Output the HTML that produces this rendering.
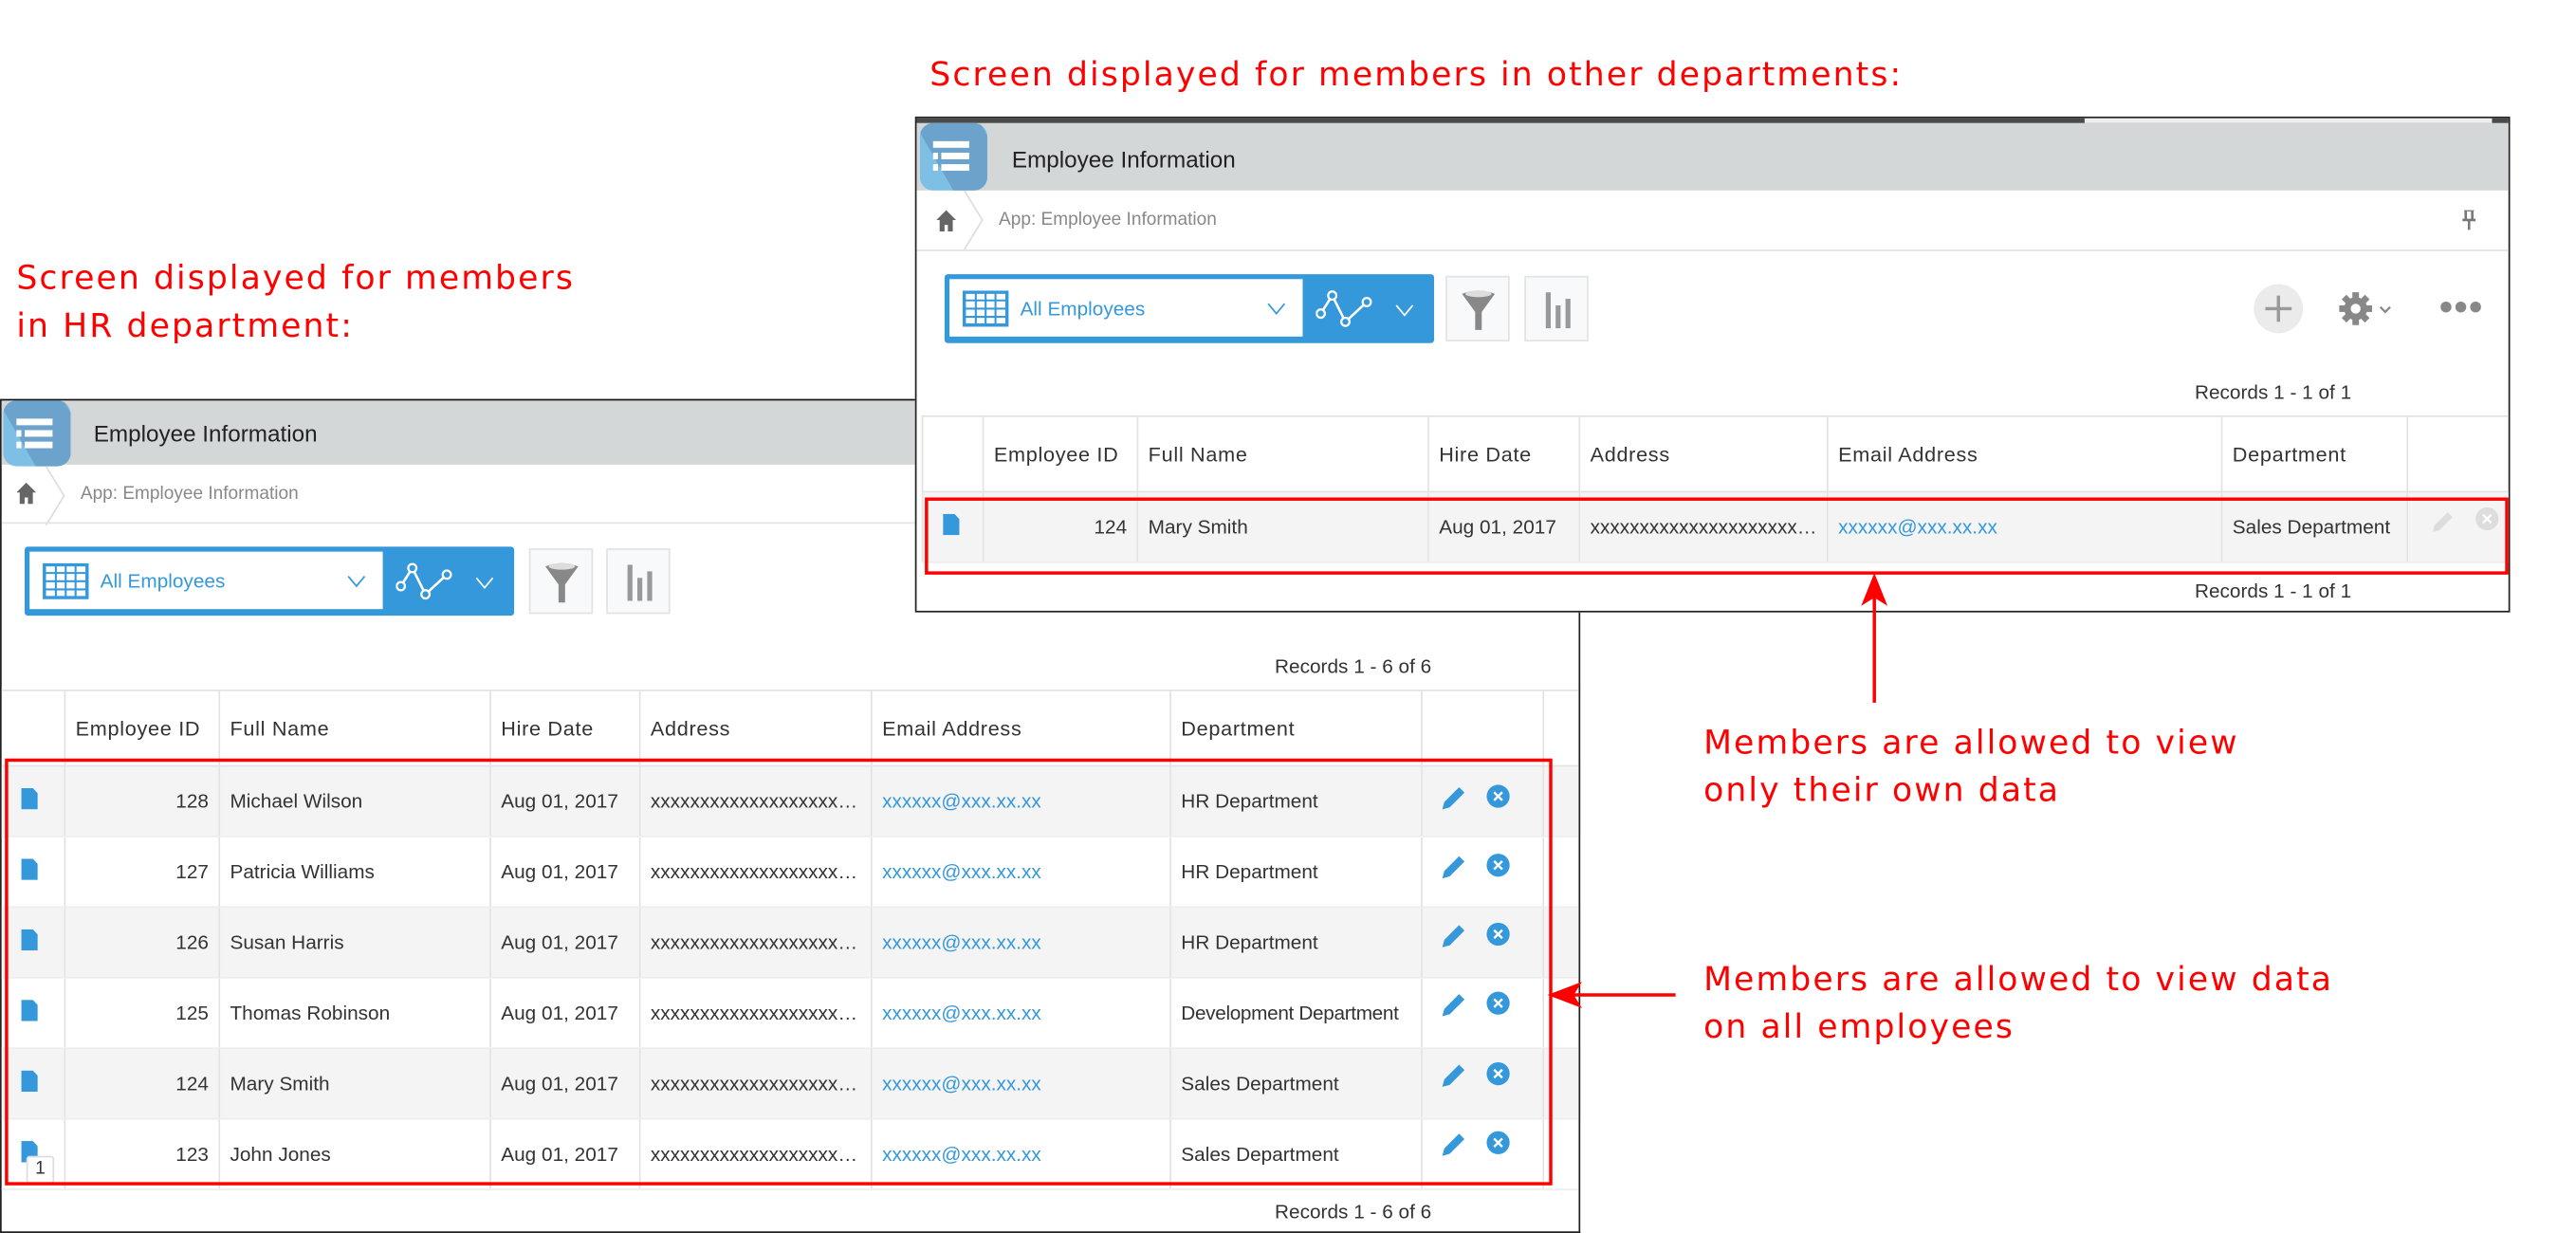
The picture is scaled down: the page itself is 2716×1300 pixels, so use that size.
<!DOCTYPE html>
<html><head><meta charset="utf-8">
<style>
html,body{margin:0;padding:0;background:#fff;overflow:hidden;width:2716px;height:1300px}
#s{position:absolute;left:0;top:0;width:1568px;height:751px;transform:scale(1.732,1.731);transform-origin:0 0;font-family:"Liberation Sans",sans-serif;color:#333}
.a{position:absolute}
.ann{position:absolute;color:#f00;font-family:"DejaVu Sans",sans-serif;font-size:20px;letter-spacing:1.2px;line-height:29px;white-space:nowrap}
.panel{position:absolute;background:#fff;border:1px solid #222;overflow:hidden}
.hdr{position:absolute;left:0;right:0;background:#d4d7d7}
.ico{position:absolute;width:40px;height:40px;border-radius:8px;background:#7ebfe6;overflow:hidden}
.ico i{position:absolute;background:#fff;height:4px}
.ttl{position:absolute;font-size:14px;color:#222}
.bc{position:absolute;font-size:11px;color:#888}
.line{position:absolute;left:0;right:0;height:1px;background:#e3e3e3}
.blue{position:absolute;background:#3498db;border-radius:2px}
.sel{position:absolute;background:#fff;left:3px;top:3px;width:214px;height:35px}
.btn{position:absolute;width:39px;height:40px;background:#f7f9fa;border:1px solid #e3e3e3;box-sizing:border-box}
table{position:absolute;border-collapse:collapse;table-layout:fixed;font-size:12px}
td,th{border-left:1px solid #e3e3e3;padding:0 6px;white-space:nowrap;overflow:hidden;text-overflow:ellipsis;font-weight:normal;text-align:left}
th{height:45px;color:#333;letter-spacing:0.4px;border-top:1px solid #e3e3e3;border-bottom:1px solid #e3e3e3;font-size:12.5px}
td{height:42px;color:#333;border-bottom:1px solid #eee}
tr.g td{background:#f4f4f4}
td.n{text-align:right}
td.e{color:#3498db}
.doc{display:inline-block;width:10px;height:13px;background:#3498db;clip-path:polygon(0 0,70% 0,100% 25%,100% 100%,0 100%)}
.rec{position:absolute;font-size:12px;color:#333}
.red{position:absolute;border:2px solid #f00}
</style></head><body><div id="s">

<div class="ann" style="left:566px;top:31px">Screen displayed for members in other departments:</div>
<div class="ann" style="left:10px;top:155px">Screen displayed for members<br>in HR department:</div>
<div class="ann" style="left:1037px;top:438px">Members are allowed to view<br>only their own data</div>
<div class="ann" style="left:1037px;top:582px">Members are allowed to view data<br>on all employees</div>

<!-- LEFT PANEL -->
<div class="panel" style="left:0;top:243px;width:960px;height:506px;border-top-color:#111">
 <div class="hdr" style="top:0;height:39px"></div>
 <div class="ico" style="left:1px;top:0px;height:40px;width:41px;background:#7ebfe6"><div class="a" style="left:14px;top:0;width:40px;height:60px;background:#6ba3cc;transform:skewX(30deg)"></div><i style="left:8px;top:11px;width:22px"></i><i style="left:8px;top:18px;width:3px"></i><i style="left:13px;top:18px;width:17px"></i><i style="left:8px;top:25px;width:3px"></i><i style="left:13px;top:25px;width:17px"></i></div>
 <div class="ttl" style="left:56px;top:12px">Employee Information</div>
 <svg class="a" style="left:9px;top:50px" width="12" height="13" viewBox="0 0 12 13"><path d="M6 0L0 6h2v7h3V9h2v4h3V6h2z" fill="#666"/></svg>
 <svg class="a" style="left:26px;top:40px" width="14" height="36"><path d="M1 0L12 18L1 36" stroke="#ddd" fill="none"/></svg>
 <div class="bc" style="left:48px;top:51px">App: Employee Information</div>
 <div class="line" style="top:74px"></div>
 <div class="blue" style="left:14px;top:89px;width:298px;height:42px">
  <div class="sel" style="width:215px">
   <svg class="a" style="left:8px;top:7px" width="28" height="22"><rect x="1" y="1" width="26" height="20" fill="#fff" stroke="#3498db" stroke-width="2"/><path d="M1 6h26M1 11h26M1 16h26M8 1v20M14 1v20M20 1v20" stroke="#3498db" stroke-width="1.2"/></svg>
   <div class="a" style="left:43px;top:11px;font-size:12px;color:#3498db">All Employees</div>
   <svg class="a" style="left:193px;top:14px" width="12" height="8"><path d="M1 1l5 6 5-6" stroke="#3498db" fill="none"/></svg>
  </div>
  <svg class="a" style="left:226px;top:8px" width="36" height="26"><path d="M3 16L10 5L18 21L31 9" stroke="#fff" stroke-width="1.5" fill="none"/><circle cx="3" cy="16" r="2.5" fill="#3498db" stroke="#fff" stroke-width="1.3"/><circle cx="10" cy="5" r="2.5" fill="#3498db" stroke="#fff" stroke-width="1.3"/><circle cx="18" cy="21" r="2.5" fill="#3498db" stroke="#fff" stroke-width="1.3"/><circle cx="31" cy="9" r="2.5" fill="#3498db" stroke="#fff" stroke-width="1.3"/></svg>
  <svg class="a" style="left:274px;top:18px" width="12" height="8"><path d="M1 1l5 6 5-6" stroke="#fff" fill="none"/></svg>
 </div>
 <div class="btn" style="left:321px;top:90px"><svg class="a" style="left:8px;top:7px" width="22" height="26"><path d="M1 3Q11 -1 21 3L13 14V25H9V14Z" fill="#888"/><ellipse cx="11" cy="3" rx="8" ry="2" fill="#ddd"/></svg></div>
 <div class="btn" style="left:368px;top:90px"><svg class="a" style="left:11px;top:9px" width="18" height="22"><rect x="1" y="0" width="3" height="22" fill="#999"/><rect x="7" y="8" width="3" height="14" fill="#999"/><rect x="13" y="4" width="3" height="18" fill="#999"/></svg></div>
 <div class="rec" style="left:775px;top:155px">Records 1 - 6 of 6</div>
 <table style="left:-1px;top:176px;width:962px">
  <colgroup><col style="width:39px"><col style="width:94px"><col style="width:165px"><col style="width:91px"><col style="width:141px"><col style="width:182px"><col style="width:153px"><col style="width:74px"><col style="width:23px"></colgroup>
  <tr><th></th><th>Employee ID</th><th>Full Name</th><th>Hire Date</th><th>Address</th><th>Email Address</th><th>Department</th><th></th><th></th></tr>
  <tr class="g"><td><span class="doc" style="margin-left:6px"></span></td><td class="n">128</td><td>Michael Wilson</td><td>Aug 01, 2017</td><td>xxxxxxxxxxxxxxxxxxxxxxx</td><td class="e">xxxxxx@xxx.xx.xx</td><td>HR Department</td><td></td><td></td></tr>
  <tr><td><span class="doc" style="margin-left:6px"></span></td><td class="n">127</td><td>Patricia Williams</td><td>Aug 01, 2017</td><td>xxxxxxxxxxxxxxxxxxxxxxx</td><td class="e">xxxxxx@xxx.xx.xx</td><td>HR Department</td><td></td><td></td></tr>
  <tr class="g"><td><span class="doc" style="margin-left:6px"></span></td><td class="n">126</td><td>Susan Harris</td><td>Aug 01, 2017</td><td>xxxxxxxxxxxxxxxxxxxxxxx</td><td class="e">xxxxxx@xxx.xx.xx</td><td>HR Department</td><td></td><td></td></tr>
  <tr><td><span class="doc" style="margin-left:6px"></span></td><td class="n">125</td><td>Thomas Robinson</td><td>Aug 01, 2017</td><td>xxxxxxxxxxxxxxxxxxxxxxx</td><td class="e">xxxxxx@xxx.xx.xx</td><td style="letter-spacing:-0.2px">Development Department</td><td></td><td></td></tr>
  <tr class="g"><td><span class="doc" style="margin-left:6px"></span></td><td class="n">124</td><td>Mary Smith</td><td>Aug 01, 2017</td><td>xxxxxxxxxxxxxxxxxxxxxxx</td><td class="e">xxxxxx@xxx.xx.xx</td><td>Sales Department</td><td></td><td></td></tr>
  <tr><td style="position:relative"><span class="doc" style="margin-left:6px"></span><span style="position:absolute;left:15px;top:22px;width:15px;height:15px;background:#fff;border:1px solid #ddd;border-radius:2px;font-size:11px;text-align:center;line-height:15px">1</span></td><td class="n">123</td><td>John Jones</td><td>Aug 01, 2017</td><td>xxxxxxxxxxxxxxxxxxxxxxx</td><td class="e">xxxxxx@xxx.xx.xx</td><td>Sales Department</td><td></td><td></td></tr>
 </table>
 <div class="rec" style="left:775px;top:487px">Records 1 - 6 of 6</div>
</div>
<div class="red" style="left:3px;top:462px;width:938px;height:256px"></div>

<!-- RIGHT PANEL -->
<div class="panel" style="left:557px;top:71px;width:969px;height:300px">
 <div class="a" style="left:0;top:0;width:970px;height:3px;background:#4a4a4a"></div>
 <div class="a" style="left:711px;top:0;width:248px;height:3px;background:#eee"></div>
 <div class="hdr" style="top:3px;height:41px"></div>
 <div class="ico" style="left:2px;top:3px;height:41px;width:41px"><div class="a" style="left:14px;top:0;width:40px;height:60px;background:#6ba3cc;transform:skewX(30deg)"></div><i style="left:8px;top:11px;width:22px"></i><i style="left:8px;top:18px;width:3px"></i><i style="left:13px;top:18px;width:17px"></i><i style="left:8px;top:25px;width:3px"></i><i style="left:13px;top:25px;width:17px"></i></div>
 <div class="ttl" style="left:58px;top:17px">Employee Information</div>
 <svg class="a" style="left:12px;top:56px" width="12" height="13" viewBox="0 0 12 13"><path d="M6 0L0 6h2v7h3V9h2v4h3V6h2z" fill="#666"/></svg>
 <svg class="a" style="left:28px;top:44px" width="14" height="36"><path d="M1 0L12 18L1 36" stroke="#ddd" fill="none"/></svg>
 <div class="bc" style="left:50px;top:56px">App: Employee Information</div>
 <svg class="a" style="left:940px;top:56px" width="10" height="12"><path d="M2 0h6M3 0v6M7 0v6M1 6h8M5 6v6" stroke="#777" stroke-width="1.5"/></svg>
 <div class="line" style="top:80px"></div>
 <div class="blue" style="left:17px;top:95px;width:298px;height:42px">
  <div class="sel" style="width:215px">
   <svg class="a" style="left:8px;top:7px" width="28" height="22"><rect x="1" y="1" width="26" height="20" fill="#fff" stroke="#3498db" stroke-width="2"/><path d="M1 6h26M1 11h26M1 16h26M8 1v20M14 1v20M20 1v20" stroke="#3498db" stroke-width="1.2"/></svg>
   <div class="a" style="left:43px;top:11px;font-size:12px;color:#3498db">All Employees</div>
   <svg class="a" style="left:193px;top:14px" width="12" height="8"><path d="M1 1l5 6 5-6" stroke="#3498db" fill="none"/></svg>
  </div>
  <svg class="a" style="left:226px;top:8px" width="36" height="26"><path d="M3 16L10 5L18 21L31 9" stroke="#fff" stroke-width="1.5" fill="none"/><circle cx="3" cy="16" r="2.5" fill="#3498db" stroke="#fff" stroke-width="1.3"/><circle cx="10" cy="5" r="2.5" fill="#3498db" stroke="#fff" stroke-width="1.3"/><circle cx="18" cy="21" r="2.5" fill="#3498db" stroke="#fff" stroke-width="1.3"/><circle cx="31" cy="9" r="2.5" fill="#3498db" stroke="#fff" stroke-width="1.3"/></svg>
  <svg class="a" style="left:274px;top:18px" width="12" height="8"><path d="M1 1l5 6 5-6" stroke="#fff" fill="none"/></svg>
 </div>
 <div class="btn" style="left:322px;top:96px"><svg class="a" style="left:8px;top:7px" width="22" height="26"><path d="M1 3Q11 -1 21 3L13 14V25H9V14Z" fill="#888"/><ellipse cx="11" cy="3" rx="8" ry="2" fill="#ddd"/></svg></div>
 <div class="btn" style="left:370px;top:96px"><svg class="a" style="left:11px;top:9px" width="18" height="22"><rect x="1" y="0" width="3" height="22" fill="#999"/><rect x="7" y="8" width="3" height="14" fill="#999"/><rect x="13" y="4" width="3" height="18" fill="#999"/></svg></div>
 <svg class="a" style="left:813px;top:100px" width="32" height="32"><circle cx="16" cy="16" r="15" fill="#ebebeb"/><path d="M16 8v16M8 16h16" stroke="#999" stroke-width="2"/></svg>
 <svg class="a" style="left:864px;top:104px" width="40" height="24"><g transform="translate(12,12)" fill="#888"><circle r="7"/><rect x="-2" y="-10" width="4" height="20"/><rect x="-10" y="-2" width="20" height="4"/><g transform="rotate(45)"><rect x="-2" y="-10" width="4" height="20"/><rect x="-10" y="-2" width="20" height="4"/></g><circle r="3" fill="#fff"/></g><path d="M27 11l3 3 3-3" stroke="#888" fill="none" stroke-width="1.3"/></svg>
 <svg class="a" style="left:927px;top:110px" width="26" height="10"><circle cx="4" cy="5" r="3.3" fill="#888"/><circle cx="13" cy="5" r="3.3" fill="#888"/><circle cx="22" cy="5" r="3.3" fill="#888"/></svg>
 <div class="rec" style="left:778px;top:160px">Records 1 - 1 of 1</div>
 <table style="left:3px;top:181px;width:966px">
  <colgroup><col style="width:37px"><col style="width:94px"><col style="width:177px"><col style="width:92px"><col style="width:151px"><col style="width:240px"><col style="width:113px"><col style="width:62px"></colgroup>
  <tr><th></th><th>Employee ID</th><th>Full Name</th><th>Hire Date</th><th>Address</th><th>Email Address</th><th>Department</th><th></th></tr>
  <tr class="g"><td><span class="doc" style="margin-left:6px"></span></td><td class="n">124</td><td>Mary Smith</td><td>Aug 01, 2017</td><td>xxxxxxxxxxxxxxxxxxxxxxxxx</td><td class="e">xxxxxx@xxx.xx.xx</td><td>Sales Department</td><td style="position:relative"><svg class="a" style="left:13px;top:10px" width="16" height="16"><path d="M2 14l1-4 8-8 3 3-8 8z" fill="#ddd"/></svg><svg class="a" style="left:41px;top:9px" width="14" height="14"><circle cx="7" cy="7" r="7" fill="#ddd"/><path d="M4.5 4.5l5 5M9.5 4.5l-5 5" stroke="#fff" stroke-width="1.3"/></svg></td></tr>
 </table>
 <div class="rec" style="left:778px;top:281px">Records 1 - 1 of 1</div>
</div>
<div class="red" style="left:563px;top:303px;width:960px;height:43px"></div>

<svg class="a" style="left:870px;top:470px" width="60" height="250">
 <defs><g id="ac"><path d="M8 17l1.2-4.5 9-9 3.3 3.3-9 9z" fill="#3498db"/><circle cx="42" cy="9" r="7" fill="#3498db"/><path d="M39.5 6.5l5 5M44.5 6.5l-5 5" stroke="#fff" stroke-width="1.4"/></g></defs>
 <use href="#ac" y="6"/><use href="#ac" y="48"/><use href="#ac" y="90"/><use href="#ac" y="132"/><use href="#ac" y="175"/><use href="#ac" y="217"/>
</svg>

<svg class="a" style="left:0;top:0" width="1568" height="751">
 <path d="M1141 428V360" stroke="#f00" stroke-width="2"/>
 <path d="M1141 349L1133 369L1141 364L1149 369Z" fill="#f00"/>
 <path d="M1020 606H955" stroke="#f00" stroke-width="2"/>
 <path d="M942 606L963 598L958 606L963 614Z" fill="#f00"/>
</svg>
</div></body></html>
